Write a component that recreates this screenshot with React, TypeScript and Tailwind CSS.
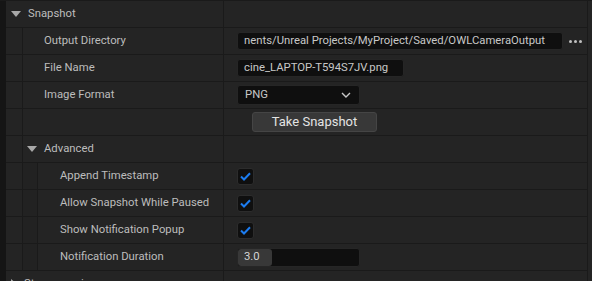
const FONT = { fontFamily: 'Roboto, "Noto Sans", sans-serif' };

function Indent({ level }: { level: number }) {
  return (
    <>
      {Array.from({ length: level }).map((_, i) => (
        <div
          key={i}
          className={
            i === 0
              ? 'h-full w-[16px] shrink-0 bg-[#242424]'
              : 'h-full w-[15px] shrink-0 border-l border-[#1a1a1a] bg-[#222222]'
          }
        />
      ))}
      {level > 0 && <div className="h-full w-px shrink-0 bg-[#1a1a1a]" />}
    </>
  );
}

function Caret({ open }: { open: boolean }) {
  return open ? (
    <svg width="10" height="6" viewBox="0 0 10 6" className="shrink-0">
      <path d="M0 0 L10 0 L5 6 Z" fill="#a8a8a8" />
    </svg>
  ) : (
    <svg width="6" height="10" viewBox="0 0 6 10" className="shrink-0">
      <path d="M0 0 L6 5 L0 10 Z" fill="#a8a8a8" />
    </svg>
  );
}

function Row({
  level = 0,
  label,
  header,
  open = true,
  children,
}: {
  level?: number;
  label?: string;
  header?: boolean;
  open?: boolean;
  children?: React.ReactNode;
}) {
  return (
    <div className="flex h-[27px] shrink-0 border-b border-[#1a1a1a]">
      <div className="flex h-full w-[217px] shrink-0 items-center">
        <Indent level={level} />
        {header ? (
          <div className={`flex items-center gap-[7px] ${level === 0 ? 'pl-[5px]' : 'pl-[4px]'}`}>
            <Caret open={open} />
            <span className="text-[11.3px] text-[#bdbdbd]">{label}</span>
          </div>
        ) : (
          <span className={`text-[11.3px] text-[#bdbdbd] ${level === 1 ? 'pl-[21px]' : 'pl-[22px]'}`}>
            {label}
          </span>
        )}
      </div>
      <div className="h-full w-px shrink-0 bg-[#1a1a1a]" />
      <div className="flex h-full flex-1 items-center pl-[13px]">{children}</div>
      <div className="h-full w-px shrink-0 bg-[#1a1a1a]" />
    </div>
  );
}

function TextBox({ value, width }: { value: string; width: string }) {
  return (
    <div
      className={`flex h-[18px] ${width} items-center overflow-hidden whitespace-nowrap rounded-[3px] border border-[#262626] bg-[#0f0f0f] pl-[6px] text-[11.3px] text-[#c8c8c8]`}
    >
      {value}
    </div>
  );
}

function Check() {
  return (
    <div className="flex h-[17px] w-[17px] items-center justify-center rounded-[3px] border border-[#2c2c2c] bg-[#0f0f0f]">
      <svg width="11" height="9" viewBox="0 0 11 9">
        <path d="M1 4.5 L4 7.5 L10 1.2" fill="none" stroke="#1c7cf0" strokeWidth="2" />
      </svg>
    </div>
  );
}

export default function App() {
  return (
    <div className="flex h-[281px] w-[592px] overflow-hidden border-t border-[#1a1a1a] bg-[#242424]" style={FONT}>
      <div className="h-full w-[6px] shrink-0 bg-[#151515]" />
      <div className="flex flex-1 flex-col">
        <Row header label="Snapshot" />
        <Row level={1} label="Output Directory">
          <TextBox width="w-[326px]" value="nents/Unreal Projects/MyProject/Saved/OWLCameraOutput" />
          <div className="ml-[6px] flex gap-[2px]">
            <span className="h-[3px] w-[3px] rounded-full bg-[#c0c0c0]" />
            <span className="h-[3px] w-[3px] rounded-full bg-[#c0c0c0]" />
            <span className="h-[3px] w-[3px] rounded-full bg-[#c0c0c0]" />
          </div>
        </Row>
        <Row level={1} label="File Name">
          <TextBox width="w-[167px]" value="cine_LAPTOP-T594S7JV.png" />
        </Row>
        <Row level={1} label="Image Format">
          <div className="flex h-[20px] w-[123px] items-center justify-between rounded-[3px] border border-[#262626] bg-[#0f0f0f] pl-[7px] pr-[8px] text-[11.3px] text-[#c8c8c8]">
            <span>PNG</span>
            <svg width="10" height="6" viewBox="0 0 10 6">
              <path d="M1 1 L5 5 L9 1" fill="none" stroke="#c8c8c8" strokeWidth="1.4" />
            </svg>
          </div>
        </Row>
        <Row level={1}>
          <div className="ml-[15px] flex h-[20px] w-[125px] items-center justify-center rounded-[3px] border border-[#454545] bg-[#383838] text-[13px] text-[#e4e4e4]">
            Take Snapshot
          </div>
        </Row>
        <Row level={1} header label="Advanced" />
        <Row level={2} label="Append Timestamp">
          <Check />
        </Row>
        <Row level={2} label="Allow Snapshot While Paused">
          <Check />
        </Row>
        <Row level={2} label="Show Notification Popup">
          <Check />
        </Row>
        <Row level={2} label="Notification Duration">
          <div className="flex h-[19px] w-[123px] items-stretch overflow-hidden rounded-[3px] border border-[#262626] bg-[#0f0f0f]">
            <div className="flex w-[34px] items-center rounded-[3px] bg-[#383838] pl-[6px] text-[11.3px] text-[#d4d4d4]">
              3.0
            </div>
          </div>
        </Row>
        <Row header open={false} label="Stereoscopic" />
      </div>
      <div className="h-full w-[4px] shrink-0 bg-[#242424]" />
    </div>
  );
}
